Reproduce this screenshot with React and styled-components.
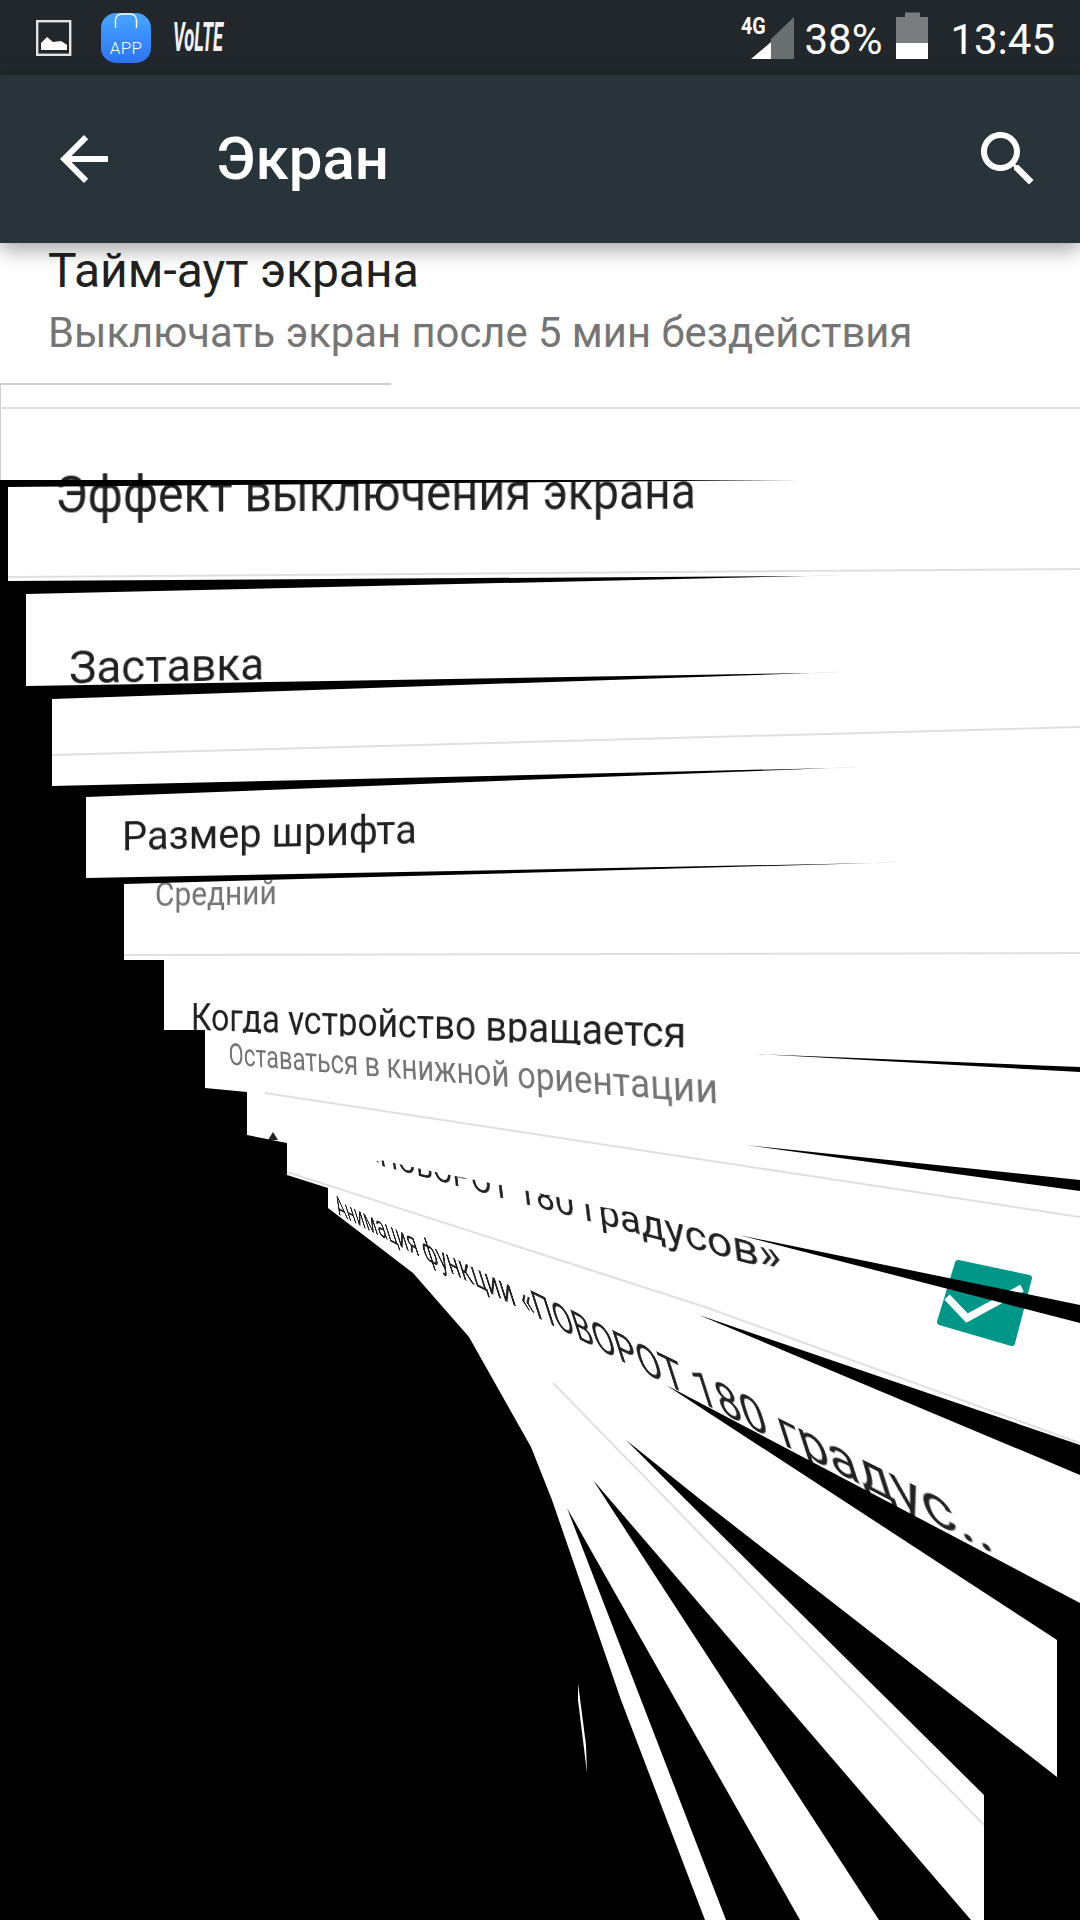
import React, { useLayoutEffect, useRef, useState } from 'react';
import styled, { createGlobalStyle } from 'styled-components';

const TOP = 243;

const GlobalStyle = createGlobalStyle`
  html, body { margin: 0; padding: 0; background: #000; }
  body { font-family: Roboto, "Noto Sans", sans-serif; }
`;

const Page = styled.div`
  width: 1080px;
  height: 1920px;
  display: flex;
  flex-direction: column;
  overflow: hidden;
  background: #000;
`;

const StatusBar = styled.header`
  height: 75px;
  flex: none;
  display: flex;
  align-items: center;
  justify-content: space-between;
  padding: 0 25px 0 36px;
  background: #21272b;
  color: #fff;
`;

const StatusGroup = styled.div`
  display: flex;
  align-items: center;
  height: 100%;
`;

const StatusGlyph = styled.svg`
  display: block;
  height: 75px;
  flex: none;
`;

const AppIcon = styled.div`
  position: relative;
  width: 50px;
  height: 50px;
  margin-left: 29px;
  flex: none;
  display: flex;
  align-items: flex-end;
  justify-content: center;
  padding-bottom: 8px;
  box-sizing: border-box;
  border-radius: 15px;
  background: linear-gradient(#4a9ffc 0, #44a0ff 20%, #3f9bff 22%, #2f74f2 100%);
  color: #fff;
  font-size: 17px;
  font-weight: 300;
  line-height: 14px;
  letter-spacing: 0.3px;
`;

const AppHandle = styled.svg`
  position: absolute;
  left: 0;
  top: 0;
`;

const VolteBox = styled.div`
  width: 50px;
  margin-left: 22px;
  flex: none;
`;

const Volte = styled.span`
  display: inline-block;
  font-size: 40px;
  font-weight: 700;
  font-style: italic;
  line-height: 40px;
  transform: scaleX(0.46);
  transform-origin: 0 50%;
  color: #f2f2f2;
`;

const SignalBox = styled.div`
  position: relative;
  width: 53px;
  height: 75px;
  flex: none;
`;

const FourG = styled.span`
  position: absolute;
  left: 0;
  top: 14px;
  font-size: 24px;
  line-height: 24px;
  font-weight: 700;
  transform: scaleX(0.82);
  transform-origin: 0 50%;
`;

const StatusText = styled.span`
  font-size: 42px;
  line-height: 42px;
  padding-top: 5px;
  margin: ${(p) => p.$margin};
`;

const AppBar = styled.div`
  position: relative;
  z-index: 3;
  height: 168px;
  flex: none;
  display: flex;
  align-items: center;
  padding: 0 36px 0 48px;
  background: #29333a;
  box-shadow: 0 6px 20px rgba(0, 0, 0, 0.38);
  color: #fff;
`;

const BarIcon = styled.svg`
  display: block;
  width: 72px;
  height: 72px;
  flex: none;
  fill: #fff;
  margin-left: ${(p) => (p.$end ? 'auto' : '0')};
`;

const Title = styled.h1`
  margin: 0 0 0 96px;
  font-size: 60px;
  font-weight: 500;
  line-height: 72px;
`;

const Canvas = styled.main`
  position: relative;
  flex: 1;
  background: #fff;
  overflow: hidden;
`;

const Row = styled.div`
  padding-left: 48px;
`;

const RowTitle = styled.div`
  font-size: 48px;
  line-height: 56px;
  color: #212121;
`;

const RowSummary = styled.div`
  margin-top: 6px;
  font-size: 41.8px;
  line-height: 56px;
  color: #757575;
`;

const Slice = styled.div`
  position: absolute;
  inset: 0;
  clip-path: ${(p) => p.$clip};
`;

const WarpedText = styled.span`
  position: absolute;
  left: 0;
  top: 0;
  white-space: nowrap;
  transform-origin: 0 0;
  font-size: 48px;
  line-height: 48px;
  color: ${(p) => (p.$muted ? '#757575' : '#212121')};
`;

const GlitchLayer = styled.svg`
  position: absolute;
  inset: 0;
  display: block;
`;

function homography(w, yTop, yBase, q) {
  const [[x0, y0], [x1, y1], [x2, y2], [x3, y3]] = q;
  const dx1 = x1 - x2, dx2 = x3 - x2, sx = x0 - x1 + x2 - x3;
  const dy1 = y1 - y2, dy2 = y3 - y2, sy = y0 - y1 + y2 - y3;
  const den = dx1 * dy2 - dx2 * dy1;
  const g = (sx * dy2 - dx2 * sy) / den;
  const h = (dx1 * sy - sx * dy1) / den;
  const a = x1 - x0 + g * x1, b = x3 - x0 + h * x3, c = x0;
  const d = y1 - y0 + g * y1, e = y3 - y0 + h * y3, f = y0;
  const hh = yBase - yTop;
  const m11 = a / w, m12 = b / hh, m13 = c - (b * yTop) / hh;
  const m21 = d / w, m22 = e / hh, m23 = f - (e * yTop) / hh;
  const m31 = g / w, m32 = h / hh, m33 = 1 - (h * yTop) / hh;
  return `matrix3d(${m11},${m21},0,${m31},${m12},${m22},0,${m32},0,0,1,0,${m13},${m23},0,${m33})`;
}

function Warped({ text, from, to, capFrom, capTo, lean = 0, muted }) {
  const ref = useRef(null);
  const [transform, setTransform] = useState('none');
  useLayoutEffect(() => {
    const w = ref.current.offsetWidth;
    const fx = from[0], fy = from[1] - TOP, tx = to[0], ty = to[1] - TOP;
    setTransform(
      homography(w, 48 * 0.131, 48 * 0.842, [
        [fx - lean * capFrom, fy - capFrom],
        [tx - lean * capTo, ty - capTo],
        [tx, ty],
        [fx, fy],
      ])
    );
  }, [text, capFrom, capTo, lean]);
  return (
    <WarpedText ref={ref} $muted={muted} style={{ transform }}>
      {text}
    </WarpedText>
  );
}

const clip = (pts) => `polygon(${pts.map(([x, y]) => `${x}px ${y - TOP}px`).join(',')})`;

const pts = (list) => list.map((p) => p.join(',')).join(' ');

const LEFT_MASS = [
  [0, 480], [801, 480], [8, 487], [8, 581], [809, 576], [26, 594], [26, 686], [813, 673],
  [52, 699], [52, 786], [833, 768], [86, 797], [86, 878], [875, 863], [124, 884], [124, 960],
  [164, 960], [164, 1030], [205, 1030], [205, 1088], [247, 1092], [247, 1135], [287, 1143],
  [287, 1175], [328, 1188], [328, 1208], [366, 1237], [413, 1273], [469, 1337], [531, 1447],
  [552, 1500], [621, 1700], [705, 1920], [0, 1920],
];
const RIGHT_MASS = [
  [666, 1385], [1080, 1603], [1080, 1920], [984, 1920], [984, 1795], [686, 1500], [626, 1440],
  [701, 1500], [1057, 1777], [1057, 1640],
];
const WEDGES = [
  [[757, 1054], [1080, 1067], [1080, 1072]],
  [[745, 1145], [1080, 1180], [1080, 1191]],
  [[739, 1235], [1080, 1305], [1080, 1323]],
  [[699, 1315], [1080, 1445], [1080, 1475]],
  [[567, 1508], [726, 1920], [800, 1920]],
  [[593, 1480], [879, 1920], [971, 1920]],
];
const DIVIDERS = [
  [[0, 408], [1080, 408]],
  [[8, 577], [1080, 569]],
  [[52, 755], [1080, 727]],
  [[124, 955], [1080, 953]],
  [[265, 1093], [1080, 1217]],
  [[287, 1172], [705, 1307], [1080, 1443]],
  [[553, 1383], [984, 1825]],
];
const HAIRS = [
  [[809, 576], [838, 575]],
  [[813, 673], [838, 672]],
  [[833, 768], [855, 767]],
  [[875, 863], [895, 862]],
];

const ROW_SEVEN_CLIP = clip([
  [260, 1185], [365, 1166], [380, 1160], [440, 1173], [505, 1186], [523, 1190], [577, 1201],
  [590, 1205], [630, 1212], [739, 1228], [1080, 1300], [1080, 1920], [260, 1920],
]);
const ROW_FIVE_CLIP = clip([
  [164, 960], [1080, 960], [1080, 1060], [757, 1054], [685, 1049], [193, 1031], [164, 1031],
]);

export default function App() {
  return (
    <Page>
      <GlobalStyle />
      <StatusBar>
        <StatusGroup>
          <StatusGlyph width="36" viewBox="36 0 36 75">
            <rect x="37.2" y="21.2" width="33" height="33.6" fill="none" stroke="#e4e4e4" strokeWidth="2.4" />
            <path d="M41 50 V43 L47 37 L53 42 L61 41 L67 45 V50 Z" fill="#fff" />
          </StatusGlyph>
          <AppIcon>
            <AppHandle width="50" height="50" viewBox="0 0 50 50">
              <path d="M14.5 15 V7 a6 6 0 0 1 6-6 h9 a6 6 0 0 1 6 6 V15" fill="none" stroke="#fff" strokeWidth="1.4" />
            </AppHandle>
            APP
          </AppIcon>
          <VolteBox>
            <Volte>VoLTE</Volte>
          </VolteBox>
        </StatusGroup>
        <StatusGroup>
          <SignalBox>
            <StatusGlyph width="53" viewBox="742 0 53 75">
              <path d="M772 39 L795 17 V59 H772 Z" fill="#6a6f72" />
              <path d="M752 59 L772 42 V59 Z" fill="#fff" />
            </StatusGlyph>
            <FourG>4G</FourG>
          </SignalBox>
          <StatusText $margin="0 14px 0 10px">38%</StatusText>
          <StatusGlyph width="32" viewBox="896 0 32 75">
            <path d="M905 12.5 H920 V17 H928 V43 H896 V17 H905 Z" fill="#7a7d7f" />
            <rect x="896" y="43" width="32" height="16" fill="#fff" />
          </StatusGlyph>
          <StatusText $margin="0 0 0 22px">13:45</StatusText>
        </StatusGroup>
      </StatusBar>

      <AppBar>
        <BarIcon viewBox="0 0 24 24">
          <path d="M20 11H7.83l5.59-5.59L12 4l-8 8 8 8 1.41-1.41L7.83 13H20v-2z" />
        </BarIcon>
        <Title>Экран</Title>
        <BarIcon $end viewBox="0 0 24 24">
          <path d="M15.5 14h-.79l-.28-.27C15.41 12.59 16 11.11 16 9.5 16 5.91 13.09 3 9.5 3S3 5.91 3 9.5 5.91 16 9.5 16c1.61 0 3.09-.59 4.23-1.57l.27.28v.79l5 4.99L20.49 19l-4.99-5zm-6 0C7.01 14 5 11.99 5 9.5S7.01 5 9.5 5 14 7.01 14 9.5 11.99 14 9.5 14z" />
        </BarIcon>
      </AppBar>

      <Canvas>
        <Row>
          <RowTitle>Тайм-аут экрана</RowTitle>
          <RowSummary>Выключать экран после 5 мин бездействия</RowSummary>
        </Row>

        <Warped text="Эффект выключения экрана" from={[55, 513]} to={[696, 509]} capFrom={37} capTo={36} />
        <Warped text="Заставка" from={[69, 684]} to={[264, 680]} capFrom={33} capTo={32} />
        <Warped text="Размер шрифта" from={[122, 851]} to={[417, 844]} capFrom={29} capTo={29} />
        <Warped text="Средний" muted from={[155, 906]} to={[277, 904]} capFrom={24} capTo={24} />
        <Slice $clip={ROW_FIVE_CLIP}>
          <Warped text="Когда устройство вращается" from={[191, 1030]} to={[686, 1048]} capFrom={27} capTo={31} />
        </Slice>
        <Warped text="Оставаться в книжной ориентации" muted from={[229, 1065]} to={[719, 1104]} capFrom={22} capTo={30} lean={0.04} />
        <Slice $clip={ROW_SEVEN_CLIP}>
          <Warped text="Функция «ПОВОРОТ 180 градусов»" from={[272, 1137]} to={[783, 1273]} capFrom={20} capTo={31} lean={0.12} />
        </Slice>
        <Warped text="Анимация функции «ПОВОРОТ 180 градус.." from={[339, 1215]} to={[997, 1556]} capFrom={21} capTo={46} lean={0.32} />

        <GlitchLayer width="1080" height={1920 - TOP} viewBox={`0 ${TOP} 1080 ${1920 - TOP}`}>
          <path d="M0 384 H391" stroke="#bdbdbd" strokeWidth="1.4" fill="none" />
          <path d="M0.5 384 V480" stroke="#cfcfcf" strokeWidth="1" fill="none" />
          {DIVIDERS.map((d, i) => (
            <polyline key={i} points={pts(d)} fill="none" stroke="#e0e0e0" strokeWidth="2" />
          ))}
          {HAIRS.map((d, i) => (
            <polyline key={i} points={pts(d)} fill="none" stroke="#eeeeee" strokeWidth="1" />
          ))}
          <polygon points="958,1263 1029,1278 1012,1343 940,1322" fill="#009688" stroke="#009688" strokeWidth="6" strokeLinejoin="round" />
          <polyline points="947,1297 967,1318 1022,1288" fill="none" stroke="#fff" strokeWidth="7.5" />
          <polygon points={pts(LEFT_MASS)} fill="#000" />
          <polygon points={pts(RIGHT_MASS)} fill="#000" />
          {WEDGES.map((w, i) => (
            <polygon key={i} points={pts(w)} fill="#000" />
          ))}
          <polygon points="268,1140 273,1132 278,1140" fill="#222" />
          <polygon points="578,1683 586,1745 587,1773 578,1700" fill="#fff" />
        </GlitchLayer>
      </Canvas>
    </Page>
  );
}
